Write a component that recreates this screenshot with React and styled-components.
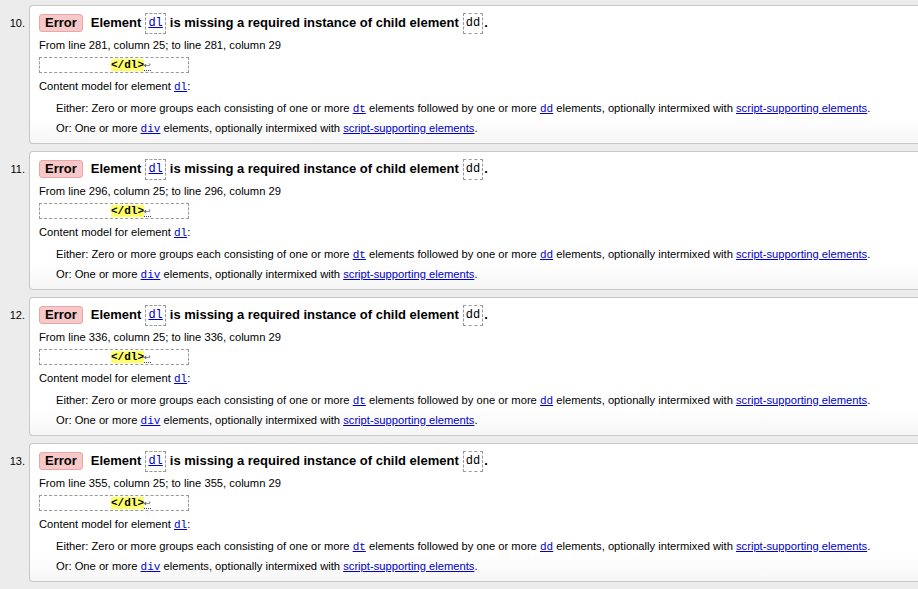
import styled, { createGlobalStyle } from "styled-components";

const GlobalStyle = createGlobalStyle`
  html, body {
    margin: 0;
    padding: 0;
    background: #ececec;
  }
  body {
    font-family: "Liberation Sans", Arial, Helvetica, sans-serif;
    color: #000;
  }
`;

const Page = styled.div`
  width: 918px;
  height: 589px;
  overflow: hidden;
  background: #ececec;
`;

const List = styled.ol`
  margin: 0;
  padding: 5px 0 0 0;
  list-style: none;
  display: flex;
  flex-direction: column;
  gap: 7px;
`;

const Item = styled.li`
  display: flex;
  align-items: flex-start;
`;

const Num = styled.div`
  width: 29px;
  flex-shrink: 0;
  font-size: 11px;
  text-align: right;
  padding-right: 4px;
  padding-top: 12px;
  box-sizing: border-box;
  color: #000;
`;

const Card = styled.div`
  flex: 1;
  height: 139px;
  box-sizing: border-box;
  background: linear-gradient(to bottom, #fff 80%, #f6f6f6 100%);
  border: 1px solid #c8c8c8;
  border-right: none;
  border-radius: 4px 0 0 4px;
  padding: 8px 0 0 9px;
  font-size: 11.2px;
`;

const Title = styled.p`
  margin: 0;
  display: flex;
  align-items: center;
  font-weight: bold;
  font-size: 13px;
  line-height: 18px;
  height: 18px;
  white-space: nowrap;
`;

const Badge = styled.span`
  display: inline-block;
  background: #f8c8c8;
  border: 1px solid #e6a9a9;
  border-radius: 3px;
  padding: 0 5px;
  height: 16px;
  line-height: 16px;
  margin-right: 8px;
  font-size: 13px;
`;

const CodeBox = styled.code`
  display: inline-block;
  font-family: "Liberation Mono", "DejaVu Sans Mono", monospace;
  font-weight: normal;
  font-size: 12px;
  line-height: 15px;
  padding: 2px 2px;
  margin: 0 ${(p) => (p.$end ? 1 : 4)}px 0 4px;
  border: 1px dashed #999;
  color: ${(p) => (p.$link ? "#00c" : "#000")};
  text-decoration: ${(p) => (p.$link ? "underline" : "none")};
`;

const Line = styled.p`
  margin: ${(p) => p.$mt || 0}px 0 0 ${(p) => p.$indent || 0}px;
  font-size: 11.2px;
  line-height: 14px;
  white-space: nowrap;
`;

const Extract = styled.div`
  margin-top: 5px;
  width: 150px;
  height: 16px;
  box-sizing: border-box;
  border: 1px dashed #999;
  padding-left: 71px;
  font-family: "Liberation Mono", "DejaVu Sans Mono", monospace;
  font-size: 11px;
  line-height: 14px;
  font-weight: bold;
  white-space: nowrap;
`;

const Mark = styled.mark`
  background: #ffff66;
  color: #000;
`;

const Return = styled.span`
  font-family: "DejaVu Sans", sans-serif;
  font-weight: normal;
  font-size: 8px;
  color: #444;
  border-bottom: 1px dotted #444;
`;

const Code = styled.a`
  font-family: "Liberation Mono", "DejaVu Sans Mono", monospace;
  font-size: 11px;
  color: #00c;
  text-decoration: underline;
`;

const Link = styled.a`
  color: #00c;
  text-decoration: underline;
`;

const errors = [
  { n: 10, from: 281 },
  { n: 11, from: 296 },
  { n: 12, from: 336 },
  { n: 13, from: 355 },
];

const ErrorItem = ({ n, from }) => (
  <Item>
    <Num>{n}.</Num>
    <Card>
      <Title>
        <Badge>Error</Badge>
        Element<CodeBox $link>dl</CodeBox>is missing a required instance of
        child element<CodeBox $end>dd</CodeBox>.
      </Title>
      <Line $mt={6}>
        From line {from}, column 25; to line {from}, column 29
      </Line>
      <Extract>
        <Mark>&lt;/dl&gt;</Mark>
        <Return>↩</Return>
      </Extract>
      <Line $mt={6}>
        Content model for element <Code>dl</Code>:
      </Line>
      <Line $mt={7} $indent={17}>
        Either: Zero or more groups each consisting of one or more{" "}
        <Code>dt</Code> elements followed by one or more <Code>dd</Code>{" "}
        elements, optionally intermixed with{" "}
        <Link>script-supporting elements</Link>.
      </Line>
      <Line $mt={5} $indent={17}>
        Or: One or more <Code>div</Code> elements, optionally intermixed with{" "}
        <Link>script-supporting elements</Link>.
      </Line>
    </Card>
  </Item>
);

export default function App() {
  return (
    <Page>
      <GlobalStyle />
      <List>
        {errors.map((e) => (
          <ErrorItem key={e.n} {...e} />
        ))}
      </List>
    </Page>
  );
}
